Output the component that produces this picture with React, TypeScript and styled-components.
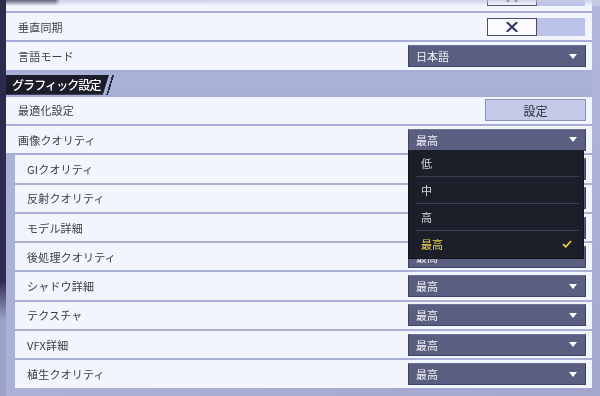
import React from 'react';
import styled, { createGlobalStyle } from 'styled-components';

const GlobalStyle = createGlobalStyle`
  html, body {
    margin: 0;
    padding: 0;
  }
  body {
    font-family: "Noto Sans CJK JP", "Noto Sans", sans-serif;
    -webkit-font-smoothing: antialiased;
  }
`;

const COLORS = {
  row: '#f3f5fc',
  line: '#a6addb',
  text: '#3a3b47',
  band: '#aab1d7',
  select: '#5a5f82',
  selectBorder: '#3f4366',
  menu: '#1c1e29',
  menuLine: '#3a3d4e',
  gold: '#f0d744',
};

const Screen = styled.div`
  position: relative;
  width: 600px;
  height: 396px;
  overflow: hidden;
  background:
    linear-gradient(180deg, #2c2b4e 0, #2c2b4e 280px, #9da1c9 320px) left top / 6px 100% no-repeat,
    linear-gradient(90deg, #2c2b4e 0, #2c2b4e 55px, #bfc3e1 60px, #c6c9e3 100%) left top / 100% 6px no-repeat,
    linear-gradient(160deg, #b9bde0 0%, #aeb2d8 60%, #a3a7cf 100%);
`;

const Viewport = styled.div`
  margin-left: 6px;
  width: 586px;
  height: 396px;
  overflow: hidden;
  -webkit-mask-image: linear-gradient(180deg, rgba(0, 0, 0, 0.25) 0, #000 6px);
  mask-image: linear-gradient(180deg, rgba(0, 0, 0, 0.25) 0, #000 6px);
`;

const List = styled.div<{ $scroll: number }>`
  display: flex;
  flex-direction: column;
  gap: 2px;
  background: ${COLORS.line};
  margin-top: ${(p) => -p.$scroll}px;
`;

const SubGroup = styled.div`
  display: flex;
  flex-direction: column;
  gap: 2px;
  padding-left: 9px;
  background: ${COLORS.band};
`;

const Row = styled.div<{ $open?: boolean }>`
  position: relative;
  z-index: ${(p) => (p.$open ? 5 : 'auto')};
  height: 27.3px;
  display: flex;
  align-items: center;
  justify-content: space-between;
  padding: 0 6px 0 12px;
  background: ${COLORS.row};
  flex-shrink: 0;
`;

const Label = styled.span`
  font-size: 11px;
  color: ${COLORS.text};
  letter-spacing: 0.2px;
`;

const SectionHeader = styled.div`
  height: 23px;
  display: flex;
  align-items: flex-end;
  background: ${COLORS.band};
  flex-shrink: 0;
`;

const HeaderTab = styled.div`
  height: 20px;
  width: 103px;
  box-sizing: border-box;
  padding-left: 6px;
  display: flex;
  align-items: center;
  background: #1c1c2a;
  color: #ffffff;
  font-size: 12px;
  font-weight: 500;
  letter-spacing: -0.9px;
  white-space: nowrap;
  clip-path: polygon(0 0, 100% 0, 94% 100%, 0 100%);
`;

const HeaderSlash = styled.div`
  width: 8px;
  height: 20px;
  margin-left: -3px;
  background: linear-gradient(90deg, transparent 0, transparent 40%, #2a2b40 40%, #2a2b40 62%, transparent 62%);
  transform: skewX(-17deg);
`;

const SelectBox = styled.div`
  position: relative;
  width: 178px;
  height: 22px;
  box-sizing: border-box;
  display: flex;
  align-items: center;
  justify-content: space-between;
  padding: 0 8px 0 7px;
  background: ${COLORS.select};
  border: 1px solid ${COLORS.selectBorder};
  border-top-color: #6c7196;
  color: #f2f2f7;
  font-size: 11px;
`;

const Caret = styled.span`
  width: 0;
  height: 0;
  border-left: 4px solid transparent;
  border-right: 4px solid transparent;
  border-top: 5px solid #ffffff;
`;

const Menu = styled.div`
  position: absolute;
  top: 100%;
  left: -1px;
  width: 176px;
  background: ${COLORS.menu};
  border: 1px solid #12131b;
  border-top: none;
  box-sizing: border-box;
  display: flex;
  flex-direction: column;
  padding: 0 4px 0 7px;
`;

const MenuItem = styled.div<{ $selected?: boolean; $last?: boolean }>`
  height: 27px;
  box-sizing: border-box;
  display: flex;
  align-items: center;
  justify-content: space-between;
  padding: 0 7px 0 5px;
  font-size: 11px;
  color: ${(p) => (p.$selected ? COLORS.gold : '#d8d9e2')};
  border-bottom: ${(p) => (p.$last ? 'none' : `1px solid ${COLORS.menuLine}`)};
`;

const ActionButton = styled.div`
  width: 101px;
  height: 22px;
  box-sizing: border-box;
  display: flex;
  align-items: center;
  justify-content: center;
  background: #c4c9e7;
  border: 1px solid #8d93b8;
  color: #2e2f3a;
  font-size: 12px;
`;

const Toggle = styled.div`
  width: 98px;
  height: 18px;
  margin-right: 1px;
  display: flex;
  background: #bcc3ea;
`;

const ToggleKnob = styled.div`
  width: 50px;
  height: 18px;
  box-sizing: border-box;
  display: flex;
  align-items: center;
  justify-content: center;
  background: #fbfbfe;
  border: 1px solid #474b6e;
`;

const CrossIcon = () => (
  <svg width="12" height="10" viewBox="0 0 12 10">
    <path d="M1.5 0.8 L10.5 9.2 M10.5 0.8 L1.5 9.2" stroke="#2e3460" strokeWidth="2" strokeLinecap="square" />
  </svg>
);

const CheckIcon = () => (
  <svg width="10" height="8" viewBox="0 0 10 8">
    <path d="M1 4.2 L3.8 6.8 L9 1" fill="none" stroke={COLORS.gold} strokeWidth="1.6" />
  </svg>
);

const ToggleControl = () => (
  <Toggle>
    <ToggleKnob>
      <CrossIcon />
    </ToggleKnob>
  </Toggle>
);

const Select: React.FC<{ value: string; options?: string[] }> = ({ value, options }) => (
  <SelectBox>
    <span>{value}</span>
    <Caret />
    {options && (
      <Menu>
        {options.map((o, i) => (
          <MenuItem key={o} $selected={o === value} $last={i === options.length - 1}>
            <span>{o}</span>
            {o === value && <CheckIcon />}
          </MenuItem>
        ))}
      </Menu>
    )}
  </SelectBox>
);

const subSettings = [
  'GIクオリティ',
  '反射クオリティ',
  'モデル詳細',
  '後処理クオリティ',
  'シャドウ詳細',
  'テクスチャ',
  'VFX詳細',
  '植生クオリティ',
];

export default function App() {
  return (
    <>
      <GlobalStyle />
      <Screen>
        <Viewport>
          <List $scroll={16.2}>
            <Row>
              <span />
              <ToggleControl />
            </Row>
            <Row>
              <Label>垂直同期</Label>
              <ToggleControl />
            </Row>
            <Row>
              <Label>言語モード</Label>
              <Select value="日本語" />
            </Row>
            <SectionHeader>
              <HeaderTab>グラフィック設定</HeaderTab>
              <HeaderSlash />
            </SectionHeader>
            <Row>
              <Label>最適化設定</Label>
              <ActionButton>設定</ActionButton>
            </Row>
            <Row $open>
              <Label>画像クオリティ</Label>
              <Select value="最高" options={['低', '中', '高', '最高']} />
            </Row>
            <SubGroup>
              {subSettings.map((s) => (
                <Row key={s}>
                  <Label>{s}</Label>
                  <Select value="最高" />
                </Row>
              ))}
            </SubGroup>
          </List>
        </Viewport>
      </Screen>
    </>
  );
}
